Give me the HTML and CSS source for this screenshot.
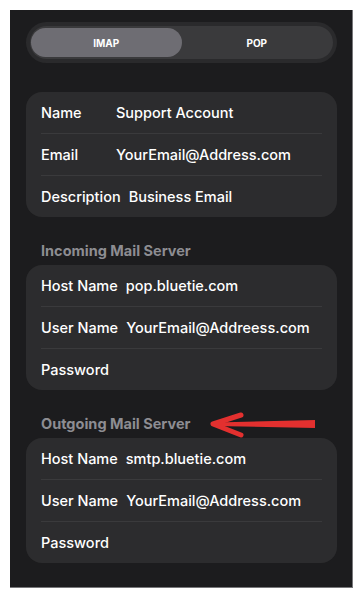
FILE: index.html
```html
<!DOCTYPE html>
<html lang="en">
<head>
    <meta charset="UTF-8">
    <meta name="viewport" content="width=device-width, initial-scale=1.0">
    <title>Mail Account</title>
    <link rel="stylesheet" href="styles.css">
</head>
<body>

    <div class="screen">
        <div class="segment">
            <div class="segment-track">
                <div class="segment-item active">IMAP</div>
                <div class="segment-item">POP</div>
            </div>
        </div>

        <div class="card first-card">
            <div class="row">
                <span class="label">Name</span>
                <span class="value">Support Account</span>
            </div>
            <div class="row">
                <span class="label">Email</span>
                <span class="value">YourEmail@Address.com</span>
            </div>
            <div class="row">
                <span class="label">Description</span>
                <span class="value">Business Email</span>
            </div>
        </div>

        <div class="section-title">Incoming Mail Server</div>
        <div class="card">
            <div class="row">
                <span class="label">Host Name</span>
                <span class="value">pop.bluetie.com</span>
            </div>
            <div class="row">
                <span class="label">User Name</span>
                <span class="value">YourEmail@Addreess.com</span>
            </div>
            <div class="row">
                <span class="label">Password</span>
                <span class="value"></span>
            </div>
        </div>

        <div class="section-title">
            Outgoing Mail Server
            <svg class="arrow" width="110" height="30" viewBox="0 0 110 30">
                <polygon points="6,12.5 106,10 106,18 6,16" fill="#e3302f"/>
                <path d="M32 5 L4 14 L32 25" fill="none" stroke="#e3302f" stroke-width="5" stroke-linecap="round" stroke-linejoin="round"/>
            </svg>
        </div>
        <div class="card">
            <div class="row">
                <span class="label">Host Name</span>
                <span class="value">smtp.bluetie.com</span>
            </div>
            <div class="row">
                <span class="label">User Name</span>
                <span class="value">YourEmail@Address.com</span>
            </div>
            <div class="row">
                <span class="label">Password</span>
                <span class="value"></span>
            </div>
        </div>
    </div>

</body>
</html>
```

FILE: styles.css
```css
body {
    margin: 0;
    padding: 0;
    background: #fff;
    font-family: Inter, "Liberation Sans", Arial, sans-serif;
}

.screen {
    margin: 10px 0 0 10px;
    width: 343px;
    height: 578px;
    background-color: #1c1c1e;
    border-right: 1px solid #77777a;
    border-bottom: 1px solid #77777a;
    padding: 12px 15px 0 16px;
    box-sizing: border-box;
}

.segment {
    background-color: #2a2a2c;
    border-radius: 21px;
    padding: 4px;
    height: 41px;
    box-sizing: border-box;
}

.segment-track {
    display: flex;
    height: 100%;
    background-color: #3a3a3c;
    border-radius: 17px;
    padding: 2px 1px;
    box-sizing: border-box;
}

.segment-item {
    flex: 1;
    display: flex;
    justify-content: center;
    align-items: center;
    color: #fff;
    font-size: 10px;
    font-weight: 700;
    border-radius: 15px;
}

.segment-item.active {
    background-color: #6e6d73;
}

.card {
    background-color: #2c2c2e;
    border-radius: 16px;
    width: 311px;
}

.first-card {
    margin-top: 29px;
}

.row {
    display: flex;
    align-items: center;
    height: 41px;
    margin: 0 15px;
    border-bottom: 1px solid #3a3a3c;
    color: #fff;
    font-size: 14.5px;
    font-weight: 500;
}

.row:last-child {
    border-bottom: none;
}

.label {
    min-width: 67px;
    margin-right: 8px;
}

.section-title {
    position: relative;
    margin: 24px 0 4px 15px;
    height: 20px;
    line-height: 20px;
    color: #8d8d92;
    font-size: 14.5px;
    font-weight: 700;
}

.arrow {
    position: absolute;
    left: 168px;
    top: -4px;
}
```
